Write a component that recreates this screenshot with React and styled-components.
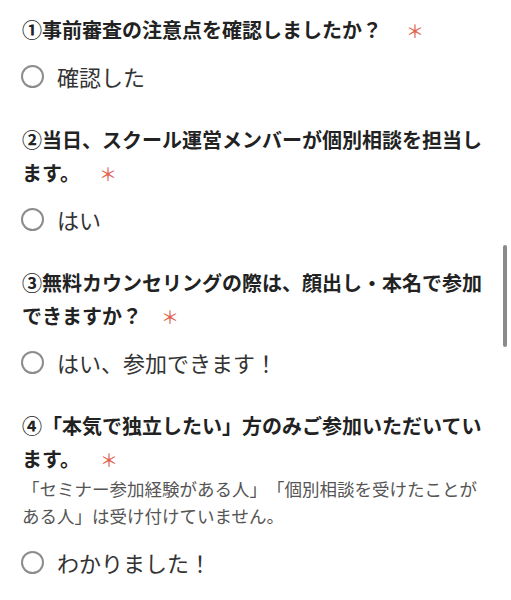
import React from 'react';
import styled, { createGlobalStyle } from 'styled-components';

const GlobalStyle = createGlobalStyle`
  html, body {
    margin: 0;
    padding: 0;
    background: #fff;
    font-family: "Noto Sans CJK JP", "Noto Sans", sans-serif;
    -webkit-font-smoothing: antialiased;
  }
`;

const Page = styled.div`
  padding: 13px 21px 20px 22px;
  width: 468px;
`;

const Field = styled.fieldset`
  border: 0;
  margin: 0;
  padding: 0;
  min-width: 0;
  & + & {
    margin-top: 31px;
  }
`;

const Title = styled.legend`
  padding: 0;
  font-size: 20px;
  font-weight: 700;
  line-height: 33px;
  color: #222;
  text-spacing-trim: space-all;
`;

const Required = styled.span`
  margin-left: ${(p) => p.$gap}px;
  font-size: 18px;
  font-weight: 400;
  line-height: 0;
  color: #e0614c;
`;

const Help = styled.p`
  margin: 0;
  font-size: 17.5px;
  line-height: 27px;
  color: #555;
  text-spacing-trim: space-all;
`;

const Options = styled.div`
  margin-top: ${(p) => (p.$afterHelp ? 17 : 14)}px;
`;

const Option = styled.label`
  display: flex;
  align-items: center;
  gap: 13px;
  font-size: 22px;
  line-height: 32px;
  color: #333;
`;

const Radio = styled.span`
  flex: none;
  width: 19px;
  height: 19px;
  border: 2px solid #8c8c8c;
  border-radius: 50%;
  margin-left: -1px;
`;

const ScrollThumb = styled.div`
  position: fixed;
  right: 4px;
  top: 245px;
  width: 4px;
  height: 102px;
  border-radius: 2px;
  background: #8a8a8a;
`;

const questions = [
  {
    title: '①事前審査の注意点を確認しましたか？',
    gap: 24,
    option: '確認した',
  },
  {
    title: '②当日、スクール運営メンバーが個別相談を担当します。',
    gap: 19,
    option: 'はい',
  },
  {
    title: '③無料カウンセリングの際は、顔出し・本名で参加できますか？',
    gap: 19,
    option: 'はい、参加できます！',
  },
  {
    title: '④「本気で独立したい」方のみご参加いただいています。',
    gap: 20,
    help: '「セミナー参加経験がある人」「個別相談を受けたことがある人」は受け付けていません。',
    option: 'わかりました！',
  },
];

export default function App() {
  return (
    <>
      <GlobalStyle />
      <Page>
        {questions.map((q) => (
          <Field key={q.title}>
            <Title>
              {q.title}
              <Required $gap={q.gap}>＊</Required>
            </Title>
            {q.help && <Help>{q.help}</Help>}
            <Options $afterHelp={!!q.help}>
              <Option>
                <Radio />
                {q.option}
              </Option>
            </Options>
          </Field>
        ))}
      </Page>
      <ScrollThumb />
    </>
  );
}
